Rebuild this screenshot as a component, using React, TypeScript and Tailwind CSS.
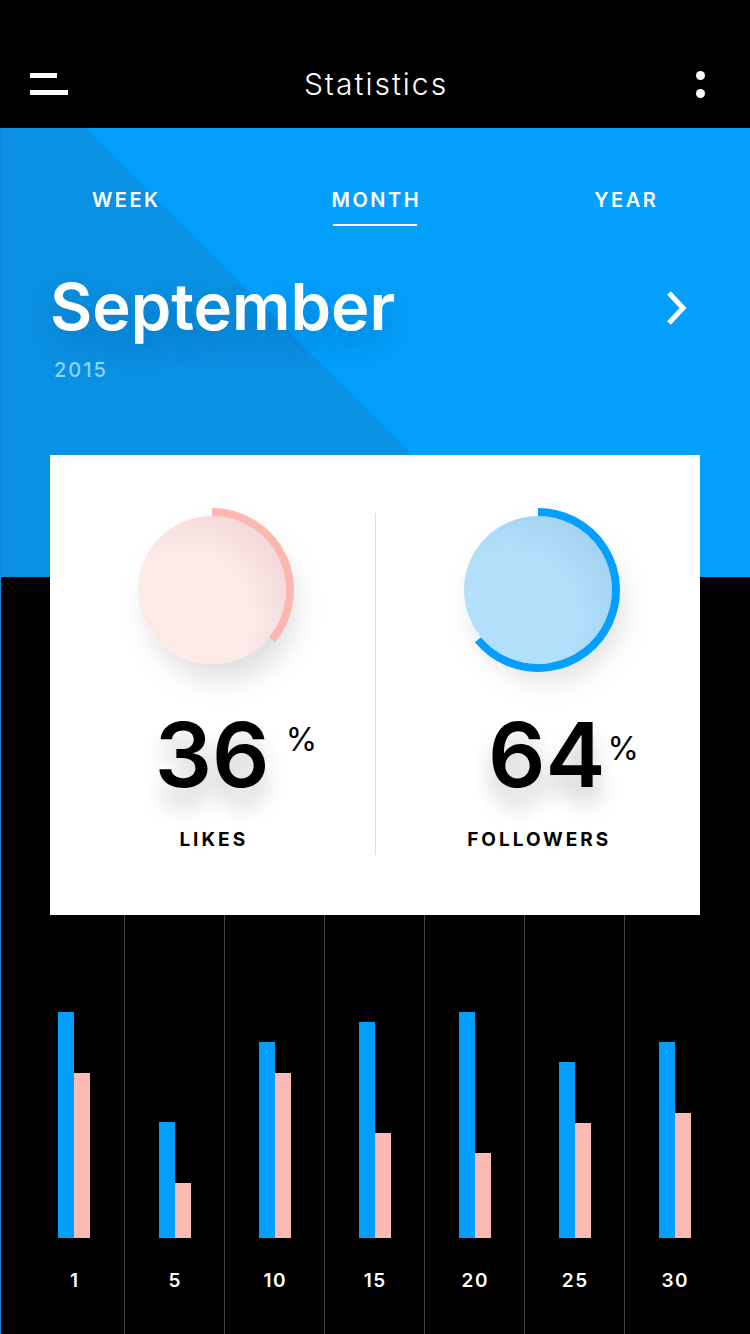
import React from "react";

const bars = [
  { label: "1", blue: 226, pink: 165 },
  { label: "5", blue: 116, pink: 55 },
  { label: "10", blue: 196, pink: 165 },
  { label: "15", blue: 216, pink: 105 },
  { label: "20", blue: 226, pink: 85 },
  { label: "25", blue: 176, pink: 115 },
  { label: "30", blue: 196, pink: 125 },
];

function arcPath(cx: number, cy: number, r: number, pct: number) {
  const a = pct * Math.PI * 2;
  const x = cx + r * Math.sin(a);
  const y = cy - r * Math.cos(a);
  const large = pct > 0.5 ? 1 : 0;
  return `M ${cx} ${cy - r} A ${r} ${r} 0 ${large} 1 ${x.toFixed(2)} ${y.toFixed(2)}`;
}

function Ring({
  id,
  pct,
  stroke,
  light,
  shade,
}: {
  id: string;
  pct: number;
  stroke: string;
  light: string;
  shade: string;
}) {
  return (
    <svg width="180" height="180" viewBox="0 0 180 180" overflow="visible">
      <defs>
        <radialGradient id={`g-${id}`} cx="0.3" cy="0.7" r="0.85">
          <stop offset="0" stopColor={light} />
          <stop offset="0.55" stopColor={light} />
          <stop offset="1" stopColor={shade} />
        </radialGradient>
        <filter id={`s-${id}`} x="-60%" y="-60%" width="220%" height="220%">
          <feDropShadow dx="10" dy="16" stdDeviation="14" floodColor="#000" floodOpacity="0.13" />
        </filter>
      </defs>
      <circle cx="90" cy="90" r="74" fill={`url(#g-${id})`} filter={`url(#s-${id})`} />
      <path d={arcPath(90, 90, 78, pct)} fill="none" stroke={stroke} strokeWidth="8" />
    </svg>
  );
}

export default function App() {
  return (
    <div className="w-[750px] min-h-[1334px] bg-black font-['Inter','Liberation_Sans',sans-serif] text-white">
      {/* Header */}
      <div className="h-[128px] pt-[40px] grid grid-cols-[1fr_auto_1fr] items-center">
        <div className="pl-[30px] flex flex-col gap-[12px]">
          <div className="w-[27px] h-[5px] bg-white" />
          <div className="w-[38px] h-[5px] bg-white" />
        </div>
        <h1 className="text-[30px] leading-none font-light tracking-[2px] pl-[2px]">Statistics</h1>
        <div className="flex justify-end pr-[45px]">
          <div className="flex flex-col gap-[9px]">
            <div className="w-[9px] h-[9px] rounded-full bg-white" />
            <div className="w-[9px] h-[9px] rounded-full bg-white" />
          </div>
        </div>
      </div>

      {/* Blue + card + chart */}
      <div className="bg-black bg-[linear-gradient(45deg,#0a91e4_378px,#03a0fc_378px)] bg-no-repeat bg-[length:100%_449px] shadow-[inset_1px_0_0_#0b86d8]">
        {/* Tabs */}
        <div className="grid grid-cols-3 pt-[62px]">
          {["WEEK", "MONTH", "YEAR"].map((t) => (
            <div key={t} className="flex flex-col items-center">
              <span className="text-[20px] leading-none font-semibold tracking-[2.5px] pl-[2.5px]">{t}</span>
              {t === "MONTH" ? (
                <div className="w-[84px] h-[2px] mt-[14px] bg-white" />
              ) : (
                <div className="h-[2px] mt-[14px]" />
              )}
            </div>
          ))}
        </div>

        {/* Month */}
        <div className="px-[50px] mt-[48px] flex items-center justify-between">
          <h2 className="text-[65px] leading-none font-semibold [text-shadow:0_14px_30px_rgba(0,40,90,0.25)]">
            September
          </h2>
          <svg width="24" height="34" viewBox="0 0 24 34" className="mr-[11px] mt-[2px]">
            <polyline points="4,2 18,17 4,32" fill="none" stroke="white" strokeWidth="5" />
          </svg>
        </div>
        <div className="px-[54px] mt-[21px] text-[20px] leading-none font-medium tracking-[2px] text-[#8fd2fa]">
          2015
        </div>

        {/* Card */}
        <div className="relative z-10 mx-[50px] mt-[75px] h-[460px] bg-white flex text-black">
          <div className="flex-1 flex flex-col items-center pt-[45px]">
            <Ring id="likes" pct={0.36} stroke="#fcb7b0" light="#fde9e8" shade="#f0d5d6" />
            <div className="relative mt-[30px]">
              <span className="block text-[90px] leading-none font-semibold [text-shadow:0_18px_22px_rgba(0,0,0,0.2)]">
                36
              </span>
              <span className="absolute left-full top-[14px] ml-[16px] text-[32px] leading-none">%</span>
            </div>
            <span className="mt-[30px] text-[19px] leading-none font-bold tracking-[3px] pl-[3px]">LIKES</span>
          </div>
          <div className="w-px bg-[#dedede] mt-[58px] h-[342px]" />
          <div className="flex-1 flex flex-col items-center pt-[45px]">
            <Ring id="followers" pct={0.64} stroke="#049ffc" light="#b2e0fb" shade="#a0d0ee" />
            <div className="relative mt-[30px] ml-[18px]">
              <span className="block text-[90px] leading-none font-semibold [text-shadow:0_18px_22px_rgba(0,0,0,0.2)]">
                64
              </span>
              <span className="absolute left-full top-[23px] ml-[2px] text-[32px] leading-none">%</span>
            </div>
            <span className="mt-[30px] text-[19px] leading-none font-bold tracking-[3px] pl-[3px]">FOLLOWERS</span>
          </div>
        </div>

        {/* Chart */}
        <div className="pl-[24px] flex h-[419px]">
          {bars.map((b, i) => (
            <div
              key={b.label}
              className={`w-[100px] flex flex-col items-center ${i > 0 ? "border-l border-[#444]" : ""}`}
            >
              <div className="h-[323px] flex items-end">
                <div className="w-[16px] bg-[#049ffc]" style={{ height: b.blue }} />
                <div className="w-[16px] bg-[#fbbab4]" style={{ height: b.pink }} />
              </div>
              <span className="mt-[33px] text-[19px] leading-none font-semibold tracking-[1.5px] pl-[1.5px]">
                {b.label}
              </span>
            </div>
          ))}
        </div>
      </div>
    </div>
  );
}
